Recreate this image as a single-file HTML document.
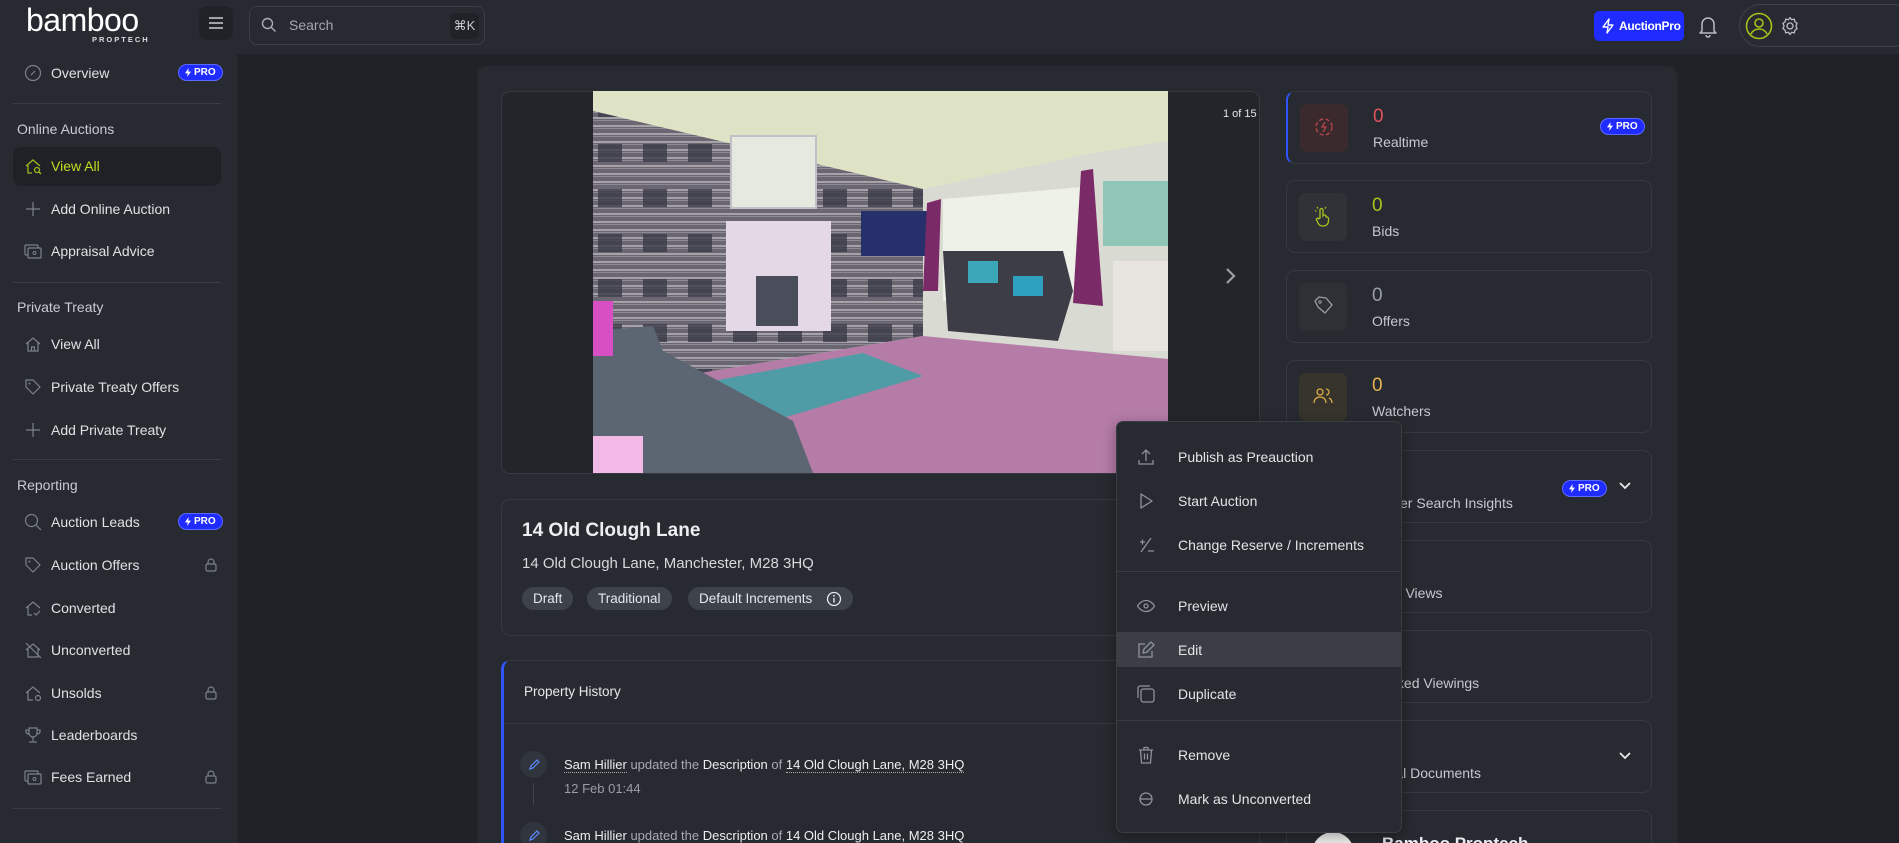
<!DOCTYPE html>
<html><head><meta charset="utf-8">
<style>
*{box-sizing:border-box;margin:0;padding:0}
html,body{width:1899px;height:843px;overflow:hidden}
body{background:#202227;font-family:"Liberation Sans",Arial,sans-serif;color:#e4e6ea;position:relative}
.a{position:absolute}
.hdr{left:0;top:0;width:1899px;height:54px;background:#272a30}
.side{left:0;top:54px;width:237px;height:789px;background:#272a30}
.si{position:absolute;left:51px;font-size:14px;color:#dfe1e5;transform:translateY(-50%)}
.sh{position:absolute;left:17px;font-size:14px;color:#c9ccd2;transform:translateY(-50%)}
.ic{position:absolute;left:24px;width:18px;height:18px;transform:translateY(-50%)}
.div{position:absolute;left:13px;width:208px;height:1px;background:#3a3d44}
.pro{position:absolute;background:#1f2bff;color:#fff;font-size:10px;font-weight:bold;border-radius:10px;height:17px;line-height:16px;padding:0 6px 0 15px;border:1px solid #5a6aff}
.pro:before{content:"";position:absolute;left:6px;top:3px;width:6px;height:9px;background:#fff;clip-path:polygon(60% 0,0 60%,45% 60%,35% 100%,100% 40%,55% 40%)}
.lock{position:absolute;left:205px;width:12px;height:14px;transform:translateY(-50%)}
.card{position:absolute;border:1px solid #363940;border-radius:9px;background:#272a30}
.st{position:absolute;left:1286px;width:366px;height:73px;border:1px solid #363940;border-radius:9px;background:#272a30}
.st .bx{position:absolute;left:12px;top:12px;width:48px;height:48px;border-radius:7px}
.st .n{position:absolute;left:85px;top:14px;font-size:19px}
.st .l{position:absolute;left:85px;top:42px;font-size:14px;color:#c5c8ce}
.mi{position:absolute;left:1178px;font-size:14px;color:#e2e4e8;transform:translateY(-50%)}
.mic{position:absolute;left:1136px;width:20px;height:20px;transform:translateY(-50%)}
.tag{position:absolute;top:587px;height:23px;line-height:23px;background:#3d424b;border-radius:12px;font-size:13.5px;color:#e6e8ec;padding:0 11px}
</style></head><body>
<div class="a hdr"></div>
<div class="a side"></div>
<div class="a" style="left:26px;top:2px;font-size:32px;color:#fff;letter-spacing:-0.5px">bamboo</div>
<div class="a" style="left:92px;top:35px;font-size:7.5px;color:#dcdde0;letter-spacing:2px;font-weight:bold">PROPTECH</div>
<div class="a" style="left:199px;top:6px;width:34px;height:34px;background:#202227;border-radius:8px"></div>
<svg class="a" style="left:207px;top:14px" width="18" height="18" viewBox="0 0 18 18"><path d="M2 4h14M2 9h14M2 14h14" stroke="#c9ccd2" stroke-width="1.6"/></svg>
<div class="a" style="left:249px;top:6px;width:236px;height:39px;border:1px solid #3b3e45;border-radius:8px"></div>
<svg class="a" style="left:261px;top:17px" width="16" height="16" viewBox="0 0 16 16"><circle cx="6.5" cy="6.5" r="5" fill="none" stroke="#a9adb4" stroke-width="1.4"/><path d="M10.2 10.2l4.3 4.3" stroke="#a9adb4" stroke-width="1.4"/></svg>
<div class="a" style="left:289px;top:17px;font-size:14px;color:#a4a8af">Search</div>
<div class="a" style="left:450px;top:13px;width:29px;height:26px;background:#202227;border-radius:5px;font-size:13px;color:#c8cad0;text-align:center;line-height:26px">⌘K</div>
<div class="a" style="left:1594px;top:11px;width:90px;height:30px;background:#1f2bff;border-radius:5px"></div>
<svg class="a" style="left:1601px;top:18px" width="14" height="16" viewBox="0 0 14 16"><path d="M8 1L2 9h5l-1 6 6-8H7z" fill="none" stroke="#fff" stroke-width="1.4" stroke-linejoin="round"/></svg>
<div class="a" style="left:1619px;top:19px;font-size:12px;font-weight:bold;color:#fff;letter-spacing:-0.3px">AuctionPro</div>
<svg class="a" style="left:1697px;top:14px" width="22" height="24" viewBox="0 0 22 24"><path d="M5 17V10a6 6 0 0112 0v7l2 2H3z M9 21a2 2 0 004 0" fill="none" stroke="#b9bcc3" stroke-width="1.5" stroke-linejoin="round"/></svg>
<div class="a" style="left:1739px;top:4px;width:175px;height:43px;border:1px solid #3e4148;border-radius:22px"></div>
<svg class="a" style="left:1745px;top:12px" width="28" height="28" viewBox="0 0 28 28"><circle cx="14" cy="14" r="12.5" fill="none" stroke="#a5c21a" stroke-width="1.6"/><circle cx="14" cy="11" r="4" fill="none" stroke="#a5c21a" stroke-width="1.6"/><path d="M6 22c2-4 5-5 8-5s6 1 8 5" fill="none" stroke="#a5c21a" stroke-width="1.6"/></svg>
<svg class="a" style="left:1780px;top:16px" width="20" height="20" viewBox="0 0 20 20"><circle cx="10" cy="10" r="3" fill="none" stroke="#b9bcc3" stroke-width="1.3"/><path d="M10 1.5l1.6 2.2 2.7-.6.6 2.7 2.2 1.6-1.2 2.6 1.2 2.6-2.2 1.6-.6 2.7-2.7-.6L10 18.5l-1.6-2.2-2.7.6-.6-2.7-2.2-1.6L4.1 10 2.9 7.4l2.2-1.6.6-2.7 2.7.6z" fill="none" stroke="#b9bcc3" stroke-width="1.3" stroke-linejoin="round"/></svg>

<svg class="ic" style="top:73px" viewBox="0 0 18 18"><circle cx="9" cy="9" r="7.5" fill="none" stroke="#7d8189" stroke-width="1.2"/><path d="M7 11l4-4" stroke="#7d8189" stroke-width="1.2"/></svg>
<div class="si" style="top:73px">Overview</div>
<div class="pro" style="left:178px;top:64px">PRO</div>
<div class="div" style="top:103px"></div>
<div class="sh" style="top:129px">Online Auctions</div>
<div class="a" style="left:13px;top:147px;width:208px;height:39px;background:#1f2126;border-radius:8px"></div>
<svg class="ic" style="top:166px" viewBox="0 0 18 18"><path d="M2 9l7-6 7 6M4 8v8h4" fill="none" stroke="#9fb81a" stroke-width="1.3"/><circle cx="13" cy="13" r="2.5" fill="none" stroke="#9fb81a" stroke-width="1.3"/><path d="M15 15l2 2" stroke="#9fb81a" stroke-width="1.3"/></svg>
<div class="si" style="top:166px;color:#c4dd1f">View All</div>
<svg class="ic" style="top:209px" viewBox="0 0 18 18"><path d="M9 2v14M2 9h14" stroke="#7d8189" stroke-width="1.2"/></svg>
<div class="si" style="top:209px">Add Online Auction</div>
<svg class="ic" style="top:251px" viewBox="0 0 18 18"><rect x="1" y="3" width="13" height="10" rx="1" fill="none" stroke="#7d8189" stroke-width="1.2"/><rect x="4" y="6" width="13" height="10" rx="1" fill="#272a30" stroke="#7d8189" stroke-width="1.2"/><circle cx="10.5" cy="11" r="1.5" fill="none" stroke="#7d8189"/></svg>
<div class="si" style="top:251px">Appraisal Advice</div>
<div class="div" style="top:282px"></div>
<div class="sh" style="top:307px">Private Treaty</div>
<svg class="ic" style="top:344px" viewBox="0 0 18 18"><path d="M2 9l7-6 7 6M4 7.5V16h10V7.5M7.5 16v-4h3v4" fill="none" stroke="#7d8189" stroke-width="1.2"/></svg>
<div class="si" style="top:344px">View All</div>
<svg class="ic" style="top:387px" viewBox="0 0 18 18"><path d="M2 2h7l7 7-7 7-7-7z" fill="none" stroke="#7d8189" stroke-width="1.2" stroke-linejoin="round"/><circle cx="5.5" cy="5.5" r="1" fill="#7d8189"/></svg>
<div class="si" style="top:387px">Private Treaty Offers</div>
<svg class="ic" style="top:430px" viewBox="0 0 18 18"><path d="M9 2v14M2 9h14" stroke="#7d8189" stroke-width="1.2"/></svg>
<div class="si" style="top:430px">Add Private Treaty</div>
<div class="div" style="top:459px"></div>
<div class="sh" style="top:485px">Reporting</div>
<svg class="ic" style="top:522px" viewBox="0 0 18 18"><circle cx="7.5" cy="7.5" r="6" fill="none" stroke="#7d8189" stroke-width="1.2"/><path d="M12 12l5 5" stroke="#7d8189" stroke-width="1.2"/></svg>
<div class="si" style="top:522px">Auction Leads</div>
<div class="pro" style="left:178px;top:513px">PRO</div>
<svg class="ic" style="top:565px" viewBox="0 0 18 18"><path d="M2 2h7l7 7-7 7-7-7z" fill="none" stroke="#7d8189" stroke-width="1.2" stroke-linejoin="round"/><circle cx="5.5" cy="5.5" r="1" fill="#7d8189"/></svg>
<div class="si" style="top:565px">Auction Offers</div>
<svg class="lock" style="top:565px" viewBox="0 0 12 14"><path d="M3 6V4a3 3 0 016 0v2" fill="none" stroke="#7d8189" stroke-width="1.2"/><rect x="1" y="6" width="10" height="7" rx="1.5" fill="none" stroke="#7d8189" stroke-width="1.2"/></svg>
<svg class="ic" style="top:608px" viewBox="0 0 18 18"><path d="M2 9l7-6 7 6M4 8v8h4M10 14l2 2 4-4" fill="none" stroke="#7d8189" stroke-width="1.2"/></svg>
<div class="si" style="top:608px">Converted</div>
<svg class="ic" style="top:650px" viewBox="0 0 18 18"><path d="M2 9l7-6 7 6M4 8v8h10V8M2 2l15 15" fill="none" stroke="#7d8189" stroke-width="1.2"/></svg>
<div class="si" style="top:650px">Unconverted</div>
<svg class="ic" style="top:693px" viewBox="0 0 18 18"><path d="M2 9l7-6 7 6M4 8v8h5" fill="none" stroke="#7d8189" stroke-width="1.2"/><circle cx="14" cy="14" r="2.5" fill="none" stroke="#7d8189" stroke-width="1.2"/></svg>
<div class="si" style="top:693px">Unsolds</div>
<svg class="lock" style="top:693px" viewBox="0 0 12 14"><path d="M3 6V4a3 3 0 016 0v2" fill="none" stroke="#7d8189" stroke-width="1.2"/><rect x="1" y="6" width="10" height="7" rx="1.5" fill="none" stroke="#7d8189" stroke-width="1.2"/></svg>
<svg class="ic" style="top:735px" viewBox="0 0 18 18"><path d="M5 2h8v5a4 4 0 01-8 0zM5 4H2v2a3 3 0 003 2M13 4h3v2a3 3 0 01-3 2M9 11v4M5 16h8" fill="none" stroke="#7d8189" stroke-width="1.2"/></svg>
<div class="si" style="top:735px">Leaderboards</div>
<svg class="ic" style="top:777px" viewBox="0 0 18 18"><rect x="1" y="3" width="13" height="10" rx="1" fill="none" stroke="#7d8189" stroke-width="1.2"/><rect x="4" y="6" width="13" height="10" rx="1" fill="#272a30" stroke="#7d8189" stroke-width="1.2"/><circle cx="10.5" cy="11" r="1.5" fill="none" stroke="#7d8189"/></svg>
<div class="si" style="top:777px">Fees Earned</div>
<svg class="lock" style="top:777px" viewBox="0 0 12 14"><path d="M3 6V4a3 3 0 016 0v2" fill="none" stroke="#7d8189" stroke-width="1.2"/><rect x="1" y="6" width="10" height="7" rx="1.5" fill="none" stroke="#7d8189" stroke-width="1.2"/></svg>
<div class="div" style="top:808px"></div>

<div class="a" style="left:477px;top:66px;width:1200px;height:777px;background:#272a30;border-radius:10px 10px 0 0"></div>
<div class="a" style="left:501px;top:91px;width:759px;height:383px;background:#23252b;border:1px solid #363940;border-radius:9px"></div>
<svg class="a" style="left:593px;top:91px" width="575" height="382" viewBox="0 0 575 382">
<defs><pattern id="str" width="60" height="8" patternUnits="userSpaceOnUse"><rect width="60" height="8" fill="#6a6772"/><rect y="2" width="60" height="2" fill="#a6a2a8"/><rect y="5" width="60" height="1" fill="#8e8a93"/></pattern>
<pattern id="sq" width="45" height="45" patternUnits="userSpaceOnUse"><rect x="5" y="8" width="24" height="18" fill="#3a3a48"/></pattern></defs>
<rect width="575" height="382" fill="#dfe3c6"/>
<polygon points="0,20 330,98 330,245 0,300" fill="url(#str)"/>
<polygon points="0,20 330,98 330,245 0,300" fill="url(#sq)" opacity=".8"/>
<polygon points="330,98 500,62 575,50 575,300 330,245" fill="#d9dad2"/>
<polygon points="350,108 490,96 490,205 350,210" fill="#eef1e8"/>
<rect x="510" y="90" width="65" height="65" fill="#8fc6b8"/>
<rect x="138" y="45" width="85" height="72" fill="#e6e9e0" stroke="#c0c0c6" stroke-width="2"/>
<rect x="133" y="130" width="105" height="110" fill="#e4d7e6"/>
<rect x="163" y="185" width="42" height="50" fill="#4a4e5a"/>
<rect x="268" y="120" width="70" height="45" fill="#27306a"/>
<polygon points="334,112 348,108 345,200 330,200" fill="#7a2a66"/>
<polygon points="488,80 500,78 510,215 480,212" fill="#7a2a66"/>
<polygon points="0,300 330,245 575,268 575,382 0,382" fill="#b57ca8"/>
<polygon points="120,290 270,262 330,285 180,330" fill="#4f9ca6"/>
<polygon points="0,240 60,235 70,260 200,330 220,382 0,382" fill="#5c6572"/>
<rect x="0" y="210" width="20" height="55" fill="#d84ec3"/>
<polygon points="350,160 470,160 480,200 465,250 355,240" fill="#3c3d47"/>
<rect x="375" y="170" width="30" height="22" fill="#3aa8b8"/>
<rect x="420" y="185" width="30" height="20" fill="#2ea0c0"/>
<rect x="520" y="170" width="55" height="90" fill="#e8e4e0"/>
<rect x="0" y="345" width="50" height="37" fill="#f2b8e6"/>
</svg>
<div class="a" style="left:1223px;top:108px;font-size:11px;color:#e5e7ea">1 of 15</div>
<svg class="a" style="left:1224px;top:266px" width="14" height="20" viewBox="0 0 14 20"><path d="M3 3l7 7-7 7" fill="none" stroke="#9a9ea5" stroke-width="2.2"/></svg>

<div class="card" style="left:501px;top:499px;width:759px;height:137px"></div>
<div class="a" style="left:522px;top:520px;font-size:19px;font-weight:bold;color:#eceef1">14 Old Clough Lane</div>
<div class="a" style="left:522px;top:555px;font-size:15px;color:#d5d8dd">14 Old Clough Lane, Manchester, M28 3HQ</div>
<div class="tag" style="left:522px">Draft</div>
<div class="tag" style="left:587px">Traditional</div>
<div class="tag" style="left:688px;width:165px">Default Increments</div>
<svg class="a" style="left:826px;top:591px" width="16" height="16" viewBox="0 0 16 16"><circle cx="8" cy="8" r="6.5" fill="none" stroke="#e6e8ec" stroke-width="1.3"/><path d="M8 7v4.5" stroke="#e6e8ec" stroke-width="1.4"/><circle cx="8" cy="4.8" r=".9" fill="#e6e8ec"/></svg>

<div class="card" style="left:501px;top:660px;width:759px;height:200px;border-left:3px solid #2f55ff"></div>
<div class="a" style="left:524px;top:684px;font-size:13.5px;color:#e6e8ec">Property History</div>
<div class="a" style="left:504px;top:723px;width:755px;height:1px;background:#363940"></div>
<div class="a" style="left:520px;top:751px;width:27px;height:27px;border-radius:50%;background:#31353d"></div>
<svg class="a" style="left:527px;top:758px" width="14" height="14" viewBox="0 0 14 14"><path d="M3 11l1-3 6-6 2 2-6 6z" fill="none" stroke="#5b8bff" stroke-width="1.2"/></svg>
<div class="a" style="left:533px;top:783px;width:1px;height:22px;background:#3f434a"></div>
<div class="a" style="left:564px;top:757px;font-size:13px;color:#a6aab1;white-space:nowrap"><span style="color:#eceef1;border-bottom:1px dotted #aaa">Sam Hillier</span> updated the <span style="color:#eceef1">Description</span> of <span style="color:#eceef1;border-bottom:1px dotted #aaa">14 Old Clough Lane, M28 3HQ</span></div>
<div class="a" style="left:564px;top:781px;font-size:13px;color:#9a9ea5">12 Feb 01:44</div>
<div class="a" style="left:520px;top:822px;width:27px;height:27px;border-radius:50%;background:#31353d"></div>
<svg class="a" style="left:527px;top:829px" width="14" height="14" viewBox="0 0 14 14"><path d="M3 11l1-3 6-6 2 2-6 6z" fill="none" stroke="#5b8bff" stroke-width="1.2"/></svg>
<div class="a" style="left:564px;top:828px;font-size:13px;color:#a6aab1;white-space:nowrap"><span style="color:#eceef1;border-bottom:1px dotted #aaa">Sam Hillier</span> updated the <span style="color:#eceef1">Description</span> of <span style="color:#eceef1;border-bottom:1px dotted #aaa">14 Old Clough Lane, M28 3HQ</span></div>

<div class="st" style="top:91px;border-left:2px solid #2f55ff"><div class="bx" style="background:#3a2a2e"></div><div class="n" style="color:#e0535a">0</div><div class="l">Realtime</div><div class="pro" style="left:312px;top:26px">PRO</div></div>
<svg class="a" style="left:1312px;top:115px" width="24" height="24" viewBox="0 0 24 24"><circle cx="12" cy="12" r="8" fill="none" stroke="#c0474f" stroke-width="1.3" stroke-dasharray="4 2.5"/><path d="M13 7l-3 5h4l-3 5" fill="none" stroke="#c0474f" stroke-width="1.2"/></svg>
<div class="st" style="top:180px"><div class="bx" style="background:#2f3236"></div><div class="n" style="color:#a8c41d">0</div><div class="l">Bids</div></div>
<svg class="a" style="left:1310px;top:204px" width="24" height="24" viewBox="0 0 24 24"><path d="M10 14V6a1.5 1.5 0 013 0v6l1-1a1.5 1.5 0 012 1v1l1 0a1.5 1.5 0 011.5 1.5V17a5 5 0 01-5 5h-1a5 5 0 01-4.5-3l-1.5-3a1.3 1.3 0 012.2-1.3z" fill="none" stroke="#a8c41d" stroke-width="1.3"/><path d="M7 3l1 1.5M16 3l-1 1.5M5 7h1.5" stroke="#a8c41d" stroke-width="1.2"/></svg>
<div class="st" style="top:270px"><div class="bx" style="background:#2d3034"></div><div class="n" style="color:#9a9ea6">0</div><div class="l">Offers</div></div>
<svg class="a" style="left:1312px;top:294px" width="22" height="22" viewBox="0 0 22 22"><path d="M3 7l4-4 7 1 6 7-7 8-7-6z" fill="none" stroke="#9a9ea6" stroke-width="1.3" stroke-linejoin="round"/><circle cx="8" cy="8" r="1.2" fill="none" stroke="#9a9ea6"/></svg>
<div class="st" style="top:360px"><div class="bx" style="background:#37342c"></div><div class="n" style="color:#e4b453">0</div><div class="l">Watchers</div></div>
<svg class="a" style="left:1311px;top:384px" width="24" height="24" viewBox="0 0 24 24"><circle cx="9" cy="8" r="3" fill="none" stroke="#d9a94a" stroke-width="1.3"/><path d="M3 19c0-4 3-6 6-6s6 2 6 6M15 5a3 3 0 010 6M18 14c2 1 3 3 3 5" fill="none" stroke="#d9a94a" stroke-width="1.3"/></svg>
<div class="st" style="top:450px"><div class="l" style="top:44px">Bidder Search Insights</div><div class="pro" style="left:275px;top:29px">PRO</div></div>
<svg class="a" style="left:1618px;top:481px" width="14" height="10" viewBox="0 0 14 10"><path d="M2 2l5 5 5-5" fill="none" stroke="#e6e8ec" stroke-width="1.8"/></svg>
<div class="st" style="top:540px"><div class="l" style="top:44px">Total Views</div></div>
<div class="st" style="top:630px"><div class="l" style="top:44px">Booked Viewings</div></div>
<div class="st" style="top:720px"><div class="l" style="top:44px">Legal Documents</div></div>
<svg class="a" style="left:1618px;top:751px" width="14" height="10" viewBox="0 0 14 10"><path d="M2 2l5 5 5-5" fill="none" stroke="#e6e8ec" stroke-width="1.8"/></svg>
<div class="st" style="top:810px;height:60px"></div>
<div class="a" style="left:1312px;top:832px;width:42px;height:42px;border-radius:50%;background:#f4f4f2"></div>
<div class="a" style="left:1382px;top:834px;font-size:17px;font-weight:bold;color:#eceef1">Bamboo Proptech</div>

<div class="a" style="left:1116px;top:421px;width:286px;height:412px;background:#272a30;border:1px solid #3a3d44;border-radius:7px;box-shadow:0 4px 14px rgba(0,0,0,.35)"></div>
<div class="a" style="left:1117px;top:571px;width:284px;height:1px;background:#3a3d44"></div>
<div class="a" style="left:1117px;top:720px;width:284px;height:1px;background:#3a3d44"></div>
<div class="a" style="left:1117px;top:632px;width:284px;height:35px;background:#3b3e45"></div>
<svg class="mic" style="top:457px" viewBox="0 0 20 20"><path d="M10 14V3M6 7l4-4 4 4M3 13v4h14v-4" fill="none" stroke="#8f939a" stroke-width="1.3"/></svg>
<div class="mi" style="top:457px">Publish as Preauction</div>
<svg class="mic" style="top:501px" viewBox="0 0 20 20"><path d="M5 3l11 7-11 7z" fill="none" stroke="#8f939a" stroke-width="1.3" stroke-linejoin="round"/></svg>
<div class="mi" style="top:501px">Start Auction</div>
<svg class="mic" style="top:545px" viewBox="0 0 20 20"><path d="M4 7h5M6.5 4.5v5M15 3L5 17M12 16h6" stroke="#8f939a" stroke-width="1.3"/></svg>
<div class="mi" style="top:545px">Change Reserve / Increments</div>
<svg class="mic" style="top:606px" viewBox="0 0 20 20"><path d="M1.5 10s3-5.5 8.5-5.5S18.5 10 18.5 10 15.5 15.5 10 15.5 1.5 10 1.5 10z" fill="none" stroke="#8f939a" stroke-width="1.3"/><circle cx="10" cy="10" r="2" fill="none" stroke="#8f939a" stroke-width="1.3"/></svg>
<div class="mi" style="top:606px">Preview</div>
<svg class="mic" style="top:650px" viewBox="0 0 20 20"><path d="M9 4H3v13h13v-6" fill="none" stroke="#8f939a" stroke-width="1.3"/><path d="M7 13l1-4 7-7 3 3-7 7z" fill="none" stroke="#8f939a" stroke-width="1.3" stroke-linejoin="round"/></svg>
<div class="mi" style="top:650px">Edit</div>
<svg class="mic" style="top:694px" viewBox="0 0 20 20"><rect x="5" y="5" width="13" height="13" rx="2.5" fill="none" stroke="#8f939a" stroke-width="1.3"/><path d="M2 14V4a2 2 0 012-2h10" fill="none" stroke="#8f939a" stroke-width="1.3"/></svg>
<div class="mi" style="top:694px">Duplicate</div>
<svg class="mic" style="top:755px" viewBox="0 0 20 20"><path d="M3 5h14M8 5V2.5h4V5M4.5 5l1 13h9l1-13M8.5 8.5v6M11.5 8.5v6" fill="none" stroke="#8f939a" stroke-width="1.3"/></svg>
<div class="mi" style="top:755px">Remove</div>
<svg class="mic" style="top:799px" viewBox="0 0 20 20"><circle cx="10" cy="10" r="6" fill="none" stroke="#8f939a" stroke-width="1.3"/><path d="M4 10h12" stroke="#8f939a" stroke-width="1.3"/></svg>
<div class="mi" style="top:799px">Mark as Unconverted</div>
</body></html>
